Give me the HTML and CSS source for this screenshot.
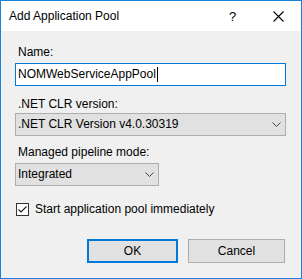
FILE: index.html
```html
<!DOCTYPE html>
<html lang="en">
<head>
	<meta charset="UTF-8">
	<title>Add Application Pool</title>
	<link rel="stylesheet" href="styles.css">
</head>
<body>
	<div class="dialog">
		<div class="titlebar">
			<span class="title">Add Application Pool</span>
			<span class="capbtn help">?</span>
			<span class="capbtn close">
				<svg width="11" height="11" viewBox="0 0 11 11"><path d="M0.5 0.5L10.5 10.5M10.5 0.5L0.5 10.5" stroke="#000" stroke-width="1.1" fill="none"/></svg>
			</span>
		</div>
		<div class="content">
			<div class="label lbl-name">Name:</div>
			<div class="textbox">NOMWebServiceAppPool<span class="caret"></span></div>

			<div class="label lbl-clr">.NET CLR version:</div>
			<div class="combo combo-clr">
				<span>.NET CLR Version v4.0.30319</span>
				<svg class="chev" width="9" height="5" viewBox="0 0 9 5"><path d="M0.5 0.5L4.5 4.5L8.5 0.5" stroke="#444" stroke-width="1" fill="none"/></svg>
			</div>

			<div class="label lbl-mode">Managed pipeline mode:</div>
			<div class="combo combo-mode">
				<span>Integrated</span>
				<svg class="chev" width="9" height="5" viewBox="0 0 9 5"><path d="M0.5 0.5L4.5 4.5L8.5 0.5" stroke="#444" stroke-width="1" fill="none"/></svg>
			</div>

			<div class="check-row">
				<span class="checkbox">
					<svg width="11" height="11" viewBox="0 0 11 11"><path d="M1.5 5.5L4 8L9.5 2.5" stroke="#222" stroke-width="1.2" fill="none"/></svg>
				</span>
				<span>Start application pool immediately</span>
			</div>

			<div class="buttons">
				<div class="btn btn-ok">OK</div>
				<div class="btn btn-cancel">Cancel</div>
			</div>
		</div>
	</div>
</body>
</html>
```

FILE: styles.css
```css
*{margin:0;padding:0;box-sizing:border-box;}
body{background-color:#fff;font-family:"Liberation Sans",Arial,sans-serif;font-size:12px;line-height:15px;color:#000;}
/* window frame */
.dialog{width:302px;height:279px;border:1px solid #1883d7;background-color:#f0f0f0;display:flex;flex-direction:column;}
.titlebar{height:30px;background-color:#fff;display:flex;align-items:center;padding-left:8px;}
.title{flex:1;}
.capbtn{width:46px;height:30px;display:flex;align-items:center;justify-content:center;}
.help{font-size:13px;padding-left:1px;}
.close{padding-top:1px;}

.content{padding:14px 15px 0 14px;}
.label{padding-left:3px;}
.lbl-clr{margin-top:11px;}
.lbl-mode{margin-top:9px;}

.textbox{margin-top:3px;height:23px;border:1px solid #0078d7;background-color:#fff;padding-left:2px;display:flex;align-items:center;}
.caret{display:inline-block;width:1px;height:15px;background-color:#000;margin-left:1px;}

.combo{height:23px;border:1px solid #adadad;background-color:#e1e1e1;padding:0 0 0 2px;display:flex;align-items:center;justify-content:space-between;}
.combo-clr{margin-top:1px;}
.combo-mode{margin-top:3px;width:144px;}
.chev{margin-right:4px;}

.check-row{margin-top:17px;display:flex;align-items:center;height:13px;}
.checkbox{width:13px;height:13px;border:1px solid #333;background-color:#fff;display:flex;align-items:center;justify-content:center;margin-right:6px;margin-left:1px;}

.buttons{margin-top:23px;display:flex;justify-content:flex-end;gap:10px;padding-right:1px;}
.btn{height:24px;background-color:#e1e1e1;border:1px solid #adadad;display:flex;align-items:center;justify-content:center;}
.btn-ok{width:91px;border:2px solid #0078d7;}
.btn-cancel{width:97px;}
```
